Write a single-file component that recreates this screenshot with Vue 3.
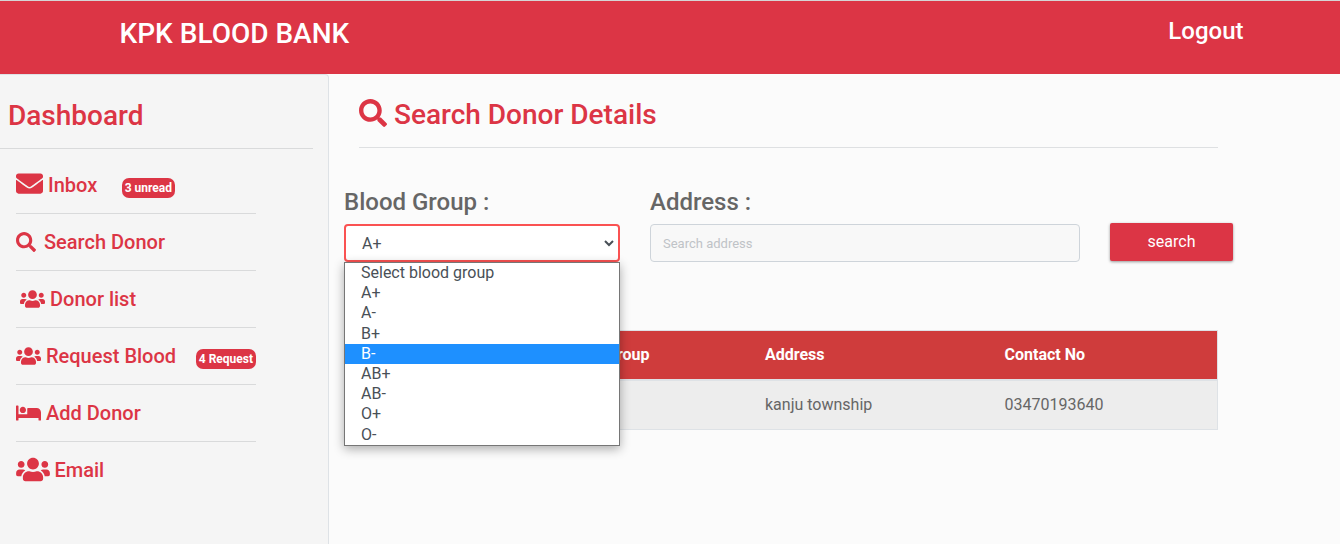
<script setup>
const icons = {
  search: {
    box: '0 0 512 512',
    d: 'M505 442.7L405.3 343c-4.5-4.5-10.6-7-17-7H372c27.6-35.3 44-79.7 44-128C416 93.1 322.9 0 208 0S0 93.1 0 208s93.1 208 208 208c48.3 0 92.7-16.4 128-44v16.3c0 6.4 2.5 12.5 7 17l99.7 99.7c9.4 9.4 24.6 9.4 33.9 0l28.3-28.3c9.4-9.4 9.4-24.6.1-34zM208 336c-70.7 0-128-57.2-128-128 0-70.7 57.2-128 128-128 70.7 0 128 57.2 128 128 0 70.7-57.2 128-128 128z',
  },
  envelope: {
    box: '0 0 512 512',
    d: 'M502.3 190.8c3.9-3.1 9.7-.2 9.7 4.7V400c0 26.5-21.5 48-48 48H48c-26.5 0-48-21.5-48-48V195.6c0-5 5.7-7.8 9.7-4.7 22.4 17.4 52.1 39.5 154.1 113.6 21.1 15.4 56.7 47.8 92.2 47.6 35.7.3 72-32.8 92.3-47.6 102-74.1 131.6-96.3 154-113.7zM256 320c23.2.4 56.6-29.2 73.4-41.4 132.7-96.3 142.8-104.7 173.4-128.7 5.8-4.5 9.2-11.5 9.2-18.9v-19c0-26.5-21.5-48-48-48H48c-26.5 0-48 21.5-48 48v19c0 7.4 3.4 14.3 9.2 18.9 30.6 23.9 40.7 32.4 173.4 128.7 16.8 12.2 50.2 41.8 73.4 41.4z',
  },
  users: {
    box: '0 0 640 512',
    d: 'M96 224c35.3 0 64-28.7 64-64s-28.7-64-64-64-64 28.7-64 64 28.7 64 64 64zm448 0c35.3 0 64-28.7 64-64s-28.7-64-64-64-64 28.7-64 64 28.7 64 64 64zm32 32h-64c-17.6 0-33.5 7.1-45.1 18.6 40.3 22.1 68.9 62 75.1 109.4h66c17.7 0 32-14.3 32-32v-32c0-35.3-28.7-64-64-64zm-256 0c61.9 0 112-50.1 112-112S381.9 32 320 32 208 82.1 208 144s50.1 112 112 112zm76.8 32h-8.3c-20.8 10-43.9 16-68.5 16s-47.6-6-68.5-16h-8.3C179.6 288 128 339.6 128 403.2V432c0 26.5 21.5 48 48 48h288c26.5 0 48-21.5 48-48v-28.8c0-63.6-51.6-115.2-115.2-115.2zm-223.7-13.4C161.5 263.1 145.6 256 128 256H64c-35.3 0-64 28.7-64 64v32c0 17.7 14.3 32 32 32h65.9c6.3-47.4 34.9-87.3 75.2-109.4z',
  },
  bed: {
    box: '0 0 640 512',
    d: 'M176 256c44.11 0 80-35.89 80-80s-35.89-80-80-80-80 35.89-80 80 35.89 80 80 80zm352-128H304c-8.84 0-16 7.16-16 16v144H64V80c0-8.84-7.16-16-16-16H16C7.16 64 0 71.16 0 80v352c0 8.84 7.16 16 16 16h32c8.84 0 16-7.16 16-16v-48h512v48c0 8.84 7.16 16 16 16h32c8.84 0 16-7.16 16-16V240c0-61.86-50.14-112-112-112z',
  },
}
const items = [
  { key: 'inbox', icon: 'envelope', label: 'Inbox', badge: '3 unread' },
  { key: 'find', icon: 'search', label: 'Search Donor' },
  { key: 'list', icon: 'users', label: 'Donor list' },
  { key: 'request', icon: 'users', label: 'Request Blood', badge: '4 Request' },
  { key: 'add', icon: 'bed', label: 'Add Donor' },
  { key: 'email', icon: 'users', label: 'Email' },
]
const groups = ['Select blood group', 'A+', 'A-', 'B+', 'B-', 'AB+', 'AB-', 'O+', 'O-']
</script>

<template>
  <div class="page">
    <header class="topbar">
      <div class="brand">KPK BLOOD BANK</div>
      <a class="logout">Logout</a>
    </header>
    <div class="body">
      <aside class="sidebar">
        <h2 class="side-title">Dashboard</h2>
        <nav class="menu">
          <a v-for="it in items" :key="it.key" class="item" :class="it.key">
            <svg class="icon" :viewBox="icons[it.icon].box"><path :d="icons[it.icon].d" /></svg>
            <span class="label">{{ it.label }}</span>
            <span v-if="it.badge" class="badge">{{ it.badge }}</span>
          </a>
        </nav>
      </aside>
      <main class="main">
        <h2 class="title">
          <svg class="title-icon" :viewBox="icons.search.box"><path :d="icons.search.d" /></svg>
          <span>Search Donor Details</span>
        </h2>
        <form class="filters">
          <div class="field group">
            <div class="caption">Blood Group :</div>
            <div class="select">
              <span>A+</span>
              <svg class="chevron" viewBox="0 0 10 7"><path d="M1 1l4 4 4-4" /></svg>
              <ul class="options">
                <li v-for="g in groups" :key="g" :class="{ active: g === 'B-' }">{{ g }}</li>
              </ul>
            </div>
          </div>
          <div class="field address">
            <div class="caption">Address :</div>
            <div class="input">Search address</div>
          </div>
          <div class="button">search</div>
        </form>
        <div class="table">
          <div class="row head">
            <span class="c-group">Blood Group</span>
            <span>Address</span>
            <span>Contact No</span>
          </div>
          <div class="row">
            <span></span>
            <span>kanju township</span>
            <span>03470193640</span>
          </div>
        </div>
      </main>
    </div>
  </div>
</template>

<style>
body {
  margin: 0;
  overflow: hidden;
}
</style>

<style scoped>
* {
  box-sizing: border-box;
}
.page {
  height: 544px;
  display: flex;
  flex-direction: column;
  overflow: hidden;
  background: #fbfbfb;
  font-family: Roboto, "Liberation Sans", sans-serif;
  font-size: 16px;
  color: #666;
}
.topbar {
  height: 74px;
  flex: none;
  display: flex;
  justify-content: space-between;
  align-items: flex-start;
  padding: 0 96.5px 0 119.5px;
  border-top: 1px solid #d5d5d5;
  background: #dc3545;
  color: #fff;
  font-weight: 500;
}
.brand {
  margin-top: 15px;
  font-size: 28px;
  line-height: 36px;
}
.logout {
  margin-top: 14px;
  font-size: 24px;
  line-height: 32px;
}
.body {
  flex: 1;
  display: flex;
}
.sidebar {
  width: 329px;
  flex: none;
  border: 1px solid #dee2e6;
  border-width: 1px 1px 0 0;
  border-top-right-radius: 4px;
  background: #f5f5f5;
  color: #dc3545;
}
.side-title {
  width: 313px;
  height: 74px;
  margin: 0;
  padding: 23px 0 0 8px;
  border-bottom: 1px solid #d9dadb;
  font-size: 28px;
  font-weight: 500;
  line-height: 36px;
}
.menu {
  width: 240px;
  margin: 8px 0 0 16px;
}
.item {
  height: 57px;
  display: flex;
  align-items: center;
  border-bottom: 1px solid #d9dadb;
  font-size: 20px;
  font-weight: 500;
  white-space: nowrap;
}
.item:last-child {
  border-bottom-color: transparent;
}
.icon {
  width: 25px;
  height: 20px;
  flex: none;
  margin-right: 5px;
  fill: currentColor;
}
.inbox .icon {
  width: 27px;
  height: 27px;
  margin-top: -3px;
}
.find .icon {
  width: 20px;
  height: 20px;
  margin: -1px 8px 0 0;
}
.list .icon {
  margin-left: 4px;
}
.email .icon {
  width: 34px;
  height: 27px;
  margin: -2px 4.5px 0 0;
}
.badge {
  height: 20px;
  margin: 5px 0 0 auto;
  padding: 0 3px;
  border-radius: 7px;
  background: #dc3545;
  color: #fff;
  font-size: 12px;
  font-weight: 700;
  line-height: 20px;
}
.inbox .badge {
  margin-left: 25px;
  padding: 0 2.5px;
}
.main {
  flex: 1;
  padding-left: 15px;
}
.title {
  width: 859px;
  height: 74px;
  margin: 0 0 0 15px;
  padding-top: 8px;
  display: flex;
  align-items: center;
  gap: 7px;
  border-bottom: 1px solid #dee0e2;
  color: #dc3545;
  font-size: 28px;
  font-weight: 500;
}
.title-icon {
  width: 28px;
  height: 28px;
  margin-top: -3px;
  fill: currentColor;
}
.filters {
  display: flex;
  margin-top: 38px;
}
.group {
  width: 276px;
  margin-right: 30px;
}
.address {
  width: 430px;
  margin-right: 30px;
}
.caption {
  height: 38px;
  font-size: 24px;
  font-weight: 500;
  line-height: 32px;
}
.select {
  position: relative;
  height: 38px;
  display: flex;
  align-items: center;
  justify-content: space-between;
  padding: 0 4px 0 16px;
  border: 2px solid #fa5252;
  border-radius: 4px;
  background: #fff;
  color: #495057;
}
.chevron {
  width: 10px;
  height: 7px;
  fill: none;
  stroke: #495057;
  stroke-width: 2;
}
.options {
  position: absolute;
  z-index: 2;
  left: -2px;
  top: 36px;
  width: 276px;
  height: 184px;
  margin: 0;
  padding: 0;
  border: 1px solid #767676;
  background: #fff;
  box-shadow: 0 3px 10px rgba(0, 0, 0, 0.32);
  list-style: none;
}
.options li {
  height: 20.2px;
  padding-left: 16px;
  line-height: 20px;
}
.options .active {
  background: #1e90ff;
  color: #fff;
}
.input {
  height: 38px;
  padding-left: 12px;
  border: 1px solid #ced4da;
  border-radius: 4px;
  background: #f8f8f8;
  color: #bfc3c7;
  font-size: 13px;
  line-height: 37px;
}
.button {
  width: 123px;
  height: 38px;
  margin-top: 37px;
  border-radius: 2px;
  background: #dc3545;
  box-shadow: 0 1px 3px rgba(0, 0, 0, 0.4);
  color: #fff;
  line-height: 37px;
  text-align: center;
}
.table {
  width: 859px;
  margin: 68px 0 0 15px;
  border: 1px solid #dee2e6;
}
.row {
  height: 48px;
  padding-bottom: 2px;
  display: grid;
  grid-template-columns: 405px 239.5px 1fr;
  align-items: center;
  background: #ededed;
}
.head {
  height: 50px;
  border-bottom: 2px solid #dee2e6;
  background: #cf3c3c;
  color: #fff;
  font-weight: 700;
}
.c-group {
  padding-right: 115.5px;
  text-align: right;
}
</style>
